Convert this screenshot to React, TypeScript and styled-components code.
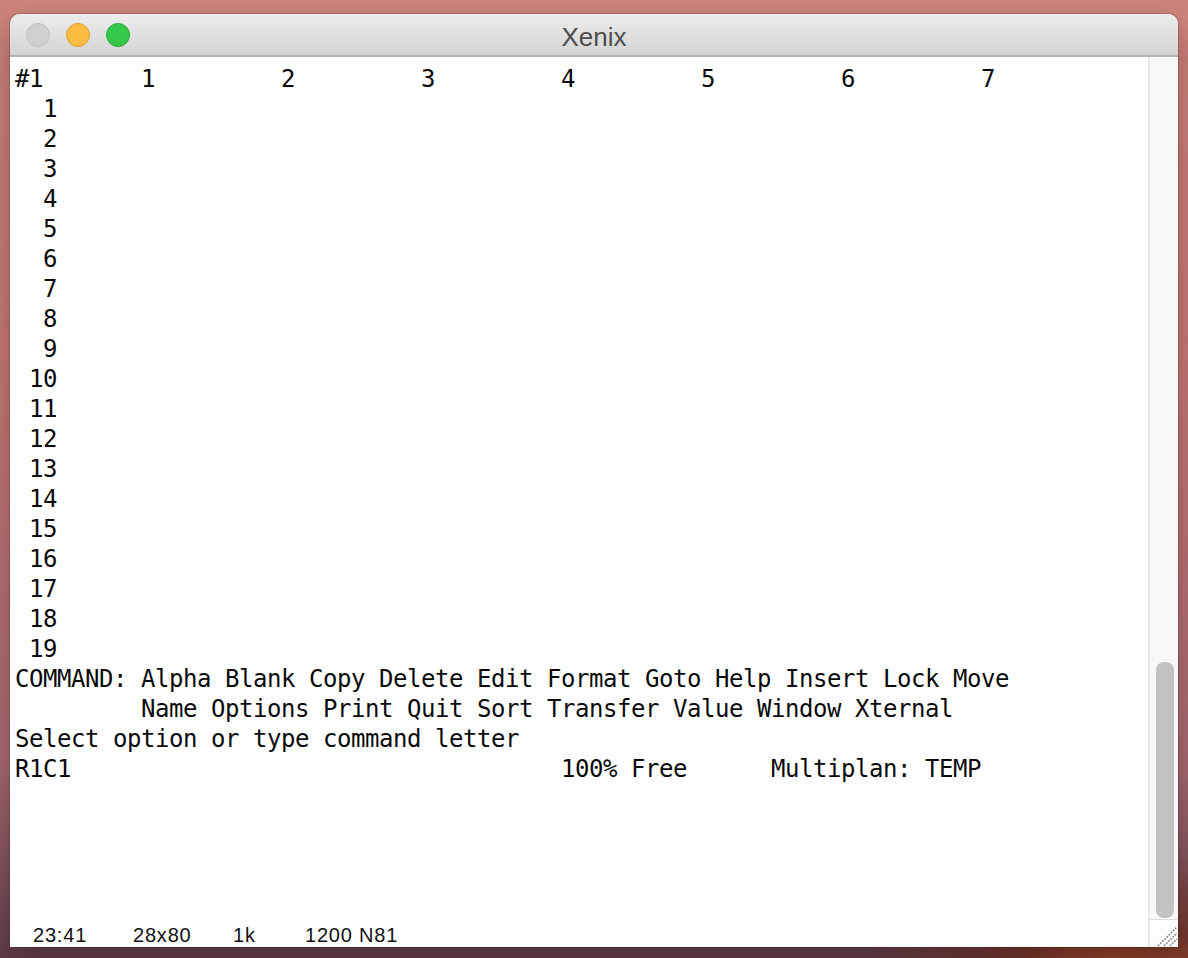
import React from "react";
import styled, { createGlobalStyle } from "styled-components";

const GlobalStyle = createGlobalStyle`
  html, body { margin: 0; padding: 0; }
  body {
    width: 1188px;
    height: 958px;
    overflow: hidden;
    background:
      radial-gradient(ellipse 260px 140px at 1120px 990px, #b5542e 0%, rgba(120,50,30,0.7) 45%, rgba(40,30,40,0) 100%),
      linear-gradient(180deg, #cf857e 0%, #c57a78 40%, #a76b74 80%, #5e3f4c 100%);
  }
`;

const Desktop = styled.div`
  box-sizing: border-box;
  width: 1188px;
  height: 958px;
  padding: 14px 10px 11px 10px;
  display: flex;
`;

const Window = styled.div`
  flex: 1;
  display: flex;
  flex-direction: column;
  border-radius: 10px 10px 0 0;
  overflow: hidden;
  box-shadow: 0 0 0 1px rgba(60, 20, 20, 0.18), 0 12px 30px rgba(40, 10, 10, 0.35);
  background: #ffffff;
`;

const TitleBar = styled.div`
  height: 41px;
  flex: none;
  display: grid;
  grid-template-columns: 1fr auto 1fr;
  align-items: center;
  background: linear-gradient(180deg, #ececec 0%, #e3e3e3 40%, #d4d4d4 100%);
  border-top: 1px solid #f6f6f6;
  border-bottom: 2px solid #b4b4b4;
  box-sizing: content-box;
  margin-top: -1px;
`;

const Lights = styled.div`
  display: flex;
  gap: 16px;
  padding-left: 16px;
`;

const Light = styled.span<{ $fill: string; $edge: string }>`
  width: 24px;
  height: 24px;
  box-sizing: border-box;
  border-radius: 50%;
  background: ${(p) => p.$fill};
  border: 1px solid ${(p) => p.$edge};
`;

const Title = styled.div`
  font-family: "Liberation Sans", Arial, sans-serif;
  font-size: 26px;
  line-height: 36px;
  padding-top: 5px;
  color: #4d4d4d;
`;

const Body = styled.div`
  flex: 1;
  display: flex;
  min-height: 0;
`;

const Terminal = styled.div`
  flex: 1;
  display: flex;
  flex-direction: column;
  background: #ffffff;
  padding: 7px 0 0 5px;
`;

const Screen = styled.div`
  font-family: "DejaVu Sans Mono", monospace;
  font-size: 24px;
  letter-spacing: -0.45px;
  line-height: 30px;
  color: #0a0a0a;
  white-space: pre;
`;

const ScreenLine = styled.div`
  height: 30px;
`;

const StatusBar = styled.div`
  margin-top: auto;
  display: grid;
  grid-template-columns: 100px 100px 72px auto;
  padding: 0 0 2px 18px;
  font-family: "Liberation Sans", Arial, sans-serif;
  font-size: 20px;
  line-height: 20px;
  letter-spacing: 0.8px;
  color: #111111;
`;

const Scrollbar = styled.div`
  width: 28px;
  flex: none;
  display: flex;
  flex-direction: column;
  border-left: 2px solid #e7e7e7;
  background: #f8f8f8;
`;

const Track = styled.div`
  flex: 1;
  display: flex;
  flex-direction: column;
  justify-content: flex-end;
  padding: 0 4px 1px 6px;
`;

const Thumb = styled.div`
  height: 256px;
  border-radius: 8px;
  background: #c2c2c2;
`;

const Corner = styled.div`
  height: 27px;
  flex: none;
  border-top: 1px solid #dedede;
  background: #fdfdfd;
  display: flex;
  justify-content: flex-end;
  align-items: flex-end;
`;

const header =
  "#1       1         2         3         4         5         6         7";

const lines: string[] = [
  header,
  ...Array.from({ length: 19 }, (_, i) => String(i + 1).padStart(3, " ")),
  "COMMAND: Alpha Blank Copy Delete Edit Format Goto Help Insert Lock Move",
  "         Name Options Print Quit Sort Transfer Value Window Xternal",
  "Select option or type command letter",
  "R1C1".padEnd(39, " ") + "100% Free".padEnd(15, " ") + "Multiplan: TEMP",
];

const status = ["23:41", "28x80", "1k", "1200 N81"];

export default function App() {
  return (
    <>
      <GlobalStyle />
      <Desktop>
        <Window>
          <TitleBar>
            <Lights>
              <Light $fill="#d0d0d0" $edge="#bfbfbf" />
              <Light $fill="#fdbc40" $edge="#df9f33" />
              <Light $fill="#35c84a" $edge="#27a93a" />
            </Lights>
            <Title>Xenix</Title>
            <div />
          </TitleBar>
          <Body>
            <Terminal>
              <Screen>
                {lines.map((l, i) => (
                  <ScreenLine key={i}>{l}</ScreenLine>
                ))}
              </Screen>
              <StatusBar>
                {status.map((s) => (
                  <span key={s}>{s}</span>
                ))}
              </StatusBar>
            </Terminal>
            <Scrollbar>
              <Track>
                <Thumb />
              </Track>
              <Corner>
                <svg width="26" height="26" viewBox="0 0 26 26">
                  <g stroke="#8f8f8f" strokeWidth="1.6" strokeDasharray="2 1">
                    <line x1="6" y1="25" x2="25" y2="6" />
                    <line x1="12" y1="25" x2="25" y2="12" />
                    <line x1="18" y1="25" x2="25" y2="18" />
                  </g>
                </svg>
              </Corner>
            </Scrollbar>
          </Body>
        </Window>
      </Desktop>
    </>
  );
}
